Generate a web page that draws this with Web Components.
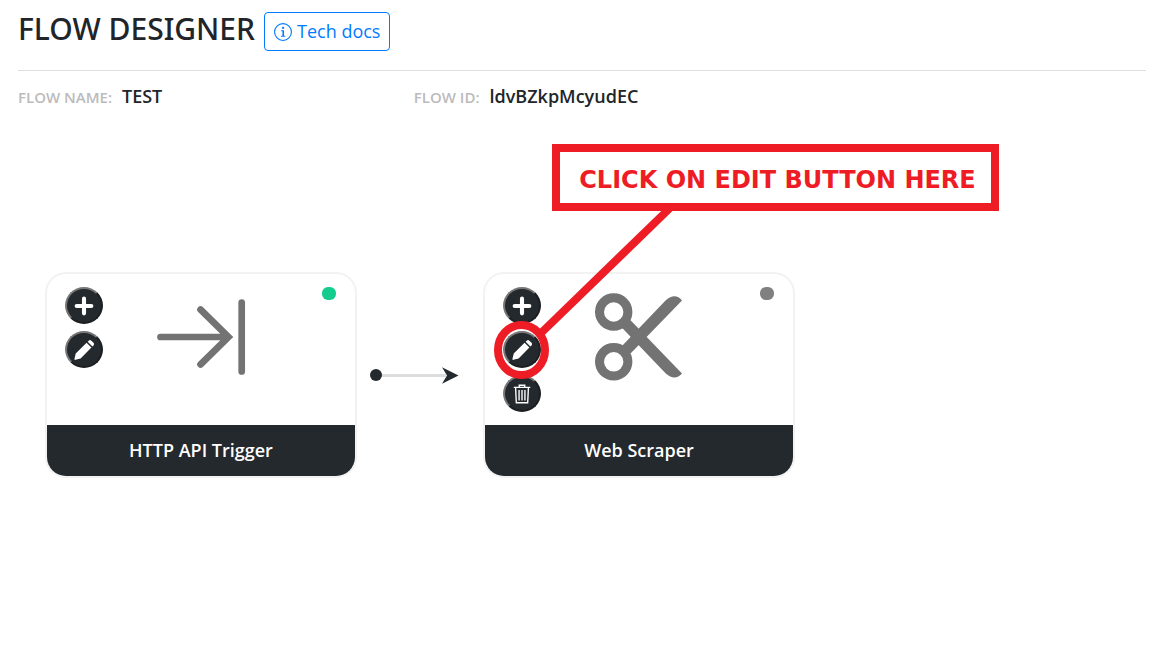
<!DOCTYPE html>
<html lang="en">
<head>
<meta charset="utf-8">
<meta name="viewport" content="width=device-width, initial-scale=1">
<title>Flow Designer</title>
<style>
  body { margin: 0; background: #fff; color: #212529; font-family: "Open Sans", "Noto Sans", sans-serif; }
</style>
</head>
<body>
<flow-page>
  <flow-header slot="header" heading="FLOW DESIGNER"></flow-header>
  <flow-field slot="meta" label="FLOW NAME:">TEST</flow-field>
  <flow-field slot="meta" label="FLOW ID:">ldvBZkpMcyudEC</flow-field>
  <flow-node name="HTTP API Trigger" icon="arrow" status="active"></flow-node>
  <flow-link></flow-link>
  <flow-node name="Web Scraper" icon="scissors" removable></flow-node>
  <flow-callout slot="callout">CLICK ON EDIT BUTTON HERE</flow-callout>
</flow-page>

<script>
class Base extends HTMLElement {
  connectedCallback() {
    if (this.shadowRoot) return;
    this.attachShadow({ mode: 'open' }).innerHTML = this.render();
  }
}

customElements.define('flow-page', class extends Base {
  render() {
    return `<style>
      :host { display: block; padding: 12px 6px 12px 18px; }
      .meta { display: grid; grid-template-columns: 20fr 37fr; padding-top: 11px; }
      .canvas { position: relative; display: flex; align-items: center; padding: 161px 0 0 27px; }
    </style>
    <slot name="header"></slot>
    <main>
      <div class="meta"><slot name="meta"></slot></div>
      <section class="canvas"><slot></slot><slot name="callout"></slot></section>
    </main>`;
  }
});

customElements.define('flow-header', class extends Base {
  render() {
    return `<style>
      :host { display: block; }
      header { display: flex; align-items: flex-start; gap: 9px; padding-bottom: 19px; border-bottom: 1px solid #dfdfe1; }
      h1 { margin: 0; font: 500 30px/34px "Noto Sans", "Open Sans", sans-serif; white-space: nowrap; }
      a { display: flex; align-items: center; gap: 5px; box-sizing: border-box; height: 39px; padding: 0 9px 2px;
          border: 1px solid #007bff; border-radius: 4px; color: #007bff; font-size: 18px; line-height: 24px;
          text-decoration: none; white-space: nowrap; }
      svg { width: 18px; height: 18px; flex: none; margin-top: 2px; }
    </style>
    <header>
      <h1>${this.getAttribute('heading')}</h1>
      <a href="#docs">
        <svg viewBox="0 0 16 16" fill="currentColor" aria-hidden="true"><path d="M8 15A7 7 0 1 1 8 1a7 7 0 0 1 0 14m0 1A8 8 0 1 0 8 0a8 8 0 0 0 0 16"/><path d="M6.3 6.4h2.6v5h1.1v.9H6.2v-.9h1.3V7.3H6.3z"/><circle cx="8.1" cy="4.4" r="1"/></svg>
        <span>Tech docs</span>
      </a>
    </header>`;
  }
});

customElements.define('flow-field', class extends Base {
  render() {
    return `<style>
      :host { display: flex; align-items: baseline; gap: 10px; line-height: 28px; white-space: nowrap; font-weight: 600; }
      .label { font-size: 15px; color: #bbb; }
      .value { font-size: 18px; }
    </style>
    <span class="label">${this.getAttribute('label')}</span><span class="value"><slot></slot></span>`;
  }
});

const GLYPHS = {
  add: '<path d="M12 4v16M4 12h16" fill="none" stroke="currentColor" stroke-width="4.500" stroke-linecap="round"/>',
  edit: '<path fill="currentColor" d="M16 3l1.200-1.200a2 2 0 0 1 2.800 0l2.400 2.400a2 2 0 0 1 0 2.800l-1.200 1.200zM14.800 4.100l5.300 5.300L8.300 21.200l-5.600 1.500a.9.9 0 0 1-1.100-1.100L3 15.900z"/>',
  remove: '<g fill="none" stroke="currentColor" stroke-width="1.500"><path d="M3 4.800h18M9 4.500V2.500h6v2M5 5l.8 16.500h12.400L19 5M8.800 7.500v11.500M12 7.500v11.500M15.200 7.500v11.500"/></g>'
};

customElements.define('tool-button', class extends Base {
  render() {
    const kind = this.getAttribute('kind');
    return `<style>
      :host { display: block; }
      button { display: flex; align-items: center; justify-content: center; box-sizing: border-box;
               width: 38px; height: 37px; padding: 0; border: 2px solid; border-color: #777 #1b1f22 #1b1f22 #777;
               border-radius: 50%; background: #24292d; color: #fff; }
      svg { display: block; width: 22px; height: 22px; flex: none; }
    </style>
    <button type="button" aria-label="${kind}"><svg viewBox="0 0 24 24" aria-hidden="true">${GLYPHS[kind]}</svg></button>`;
  }
});

const ICONS = {
  arrow: `<g fill="none" stroke="currentColor" stroke-width="6.700" stroke-linecap="round">
      <path d="M9.500 50H77M49.500 22.500L77.500 50L49.500 77.500" stroke-linejoin="miter"/><path d="M90.700 15.500v69"/></g>`,
  scissors: `<g fill="none" stroke="currentColor" stroke-width="9"><circle cx="24.700" cy="25" r="14.200"/><circle cx="24.700" cy="74.800" r="14.200"/></g>
      <path fill="currentColor" d="M33.200 41L41.300 33L93 86.400Q86 94.500 76.800 86.500z"/>
      <path fill="currentColor" d="M33.200 58.800L41.300 66.800L93 13.400Q86 5.300 76.800 13.300z"/>`
};

customElements.define('flow-node', class extends Base {
  render() {
    const active = this.getAttribute('status') === 'active';
    return `<style>
      :host { display: block; flex: 0 0 312px; box-sizing: border-box; border: 2px solid #f2f2f2;
              border-radius: 21px; overflow: hidden; background: #fff; }
      .body { display: grid; grid-template-columns: 1fr 100px 1fr; align-items: start; padding: 13px 19px 12px 18px; }
      .tools { display: grid; gap: 7px; height: 126px; align-content: start; }
      .icon { display: block; width: 100px; height: 100px; color: #737373; }
      .dot { justify-self: end; width: 14px; height: 13px; border-radius: 6px; background: ${active ? '#14cc8e' : '#808080'}; }
      h2 { margin: 0; background: #24292d; color: #fff; text-align: center; font-size: 18px; line-height: 51px; font-weight: 600; }
    </style>
    <div class="body">
      <div class="tools">
        <tool-button kind="add"></tool-button>
        <tool-button kind="edit"></tool-button>
        ${this.hasAttribute('removable') ? '<tool-button kind="remove"></tool-button>' : ''}
      </div>
      <svg class="icon" viewBox="0 0 100 100" aria-hidden="true">${ICONS[this.getAttribute('icon')]}</svg>
      <span class="dot"></span>
    </div>
    <h2>${this.getAttribute('name')}</h2>`;
  }
});

customElements.define('flow-link', class extends Base {
  render() {
    return `<style>
      :host { display: block; flex: 0 0 126px; }
      svg { display: block; width: 126px; height: 20px; }
    </style>
    <svg viewBox="0 0 126 20" aria-hidden="true">
      <path d="M19 10.500h70" stroke="#ddd" stroke-width="3"/>
      <circle cx="19" cy="10" r="6" fill="#24292d"/>
      <path d="M85 2.200L101.500 10.500L85 18.800L90 10.500z" fill="#24292d"/>
    </svg>`;
  }
});

customElements.define('flow-callout', class extends Base {
  render() {
    return `<style>
      :host { position: absolute; left: 476px; top: 33px; display: block; width: 505px; height: 235px; pointer-events: none; }
      svg { position: absolute; inset: 0; width: 505px; height: 235px; }
      p { box-sizing: border-box; margin: 0 0 0 58px; border: 8px solid #ee1c25; background: #fff; color: #ee1c25;
          padding: 6px 0 0 4px; text-align: center; white-space: nowrap; font: 700 24px/45px "DejaVu Sans", sans-serif; }
    </style>
    <svg viewBox="0 0 505 235" fill="none" stroke="#ee1c25" stroke-width="8" aria-hidden="true">
      <path d="M177 63L45 191"/><ellipse cx="27.500" cy="206" rx="23.500" ry="25"/>
    </svg>
    <p><slot></slot></p>`;
  }
});
</script>
</body>
</html>
